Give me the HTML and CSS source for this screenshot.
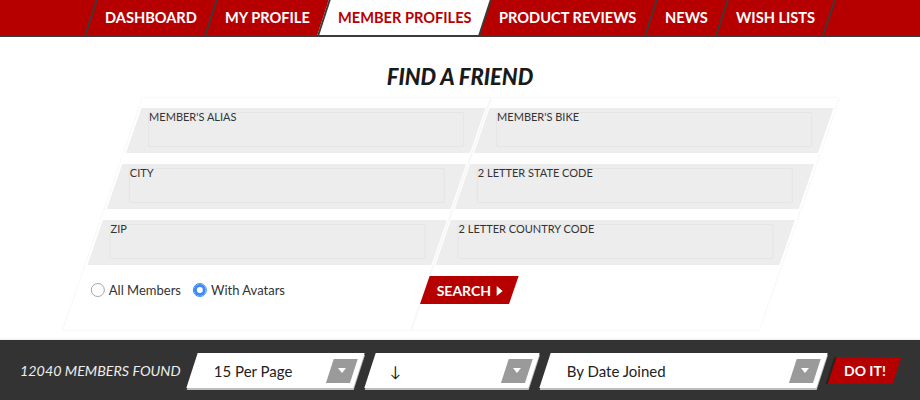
FILE: index.html
```html
<!DOCTYPE html>
<html lang="en">
<head>
  <meta charset="UTF-8" />
  <meta name="viewport" content="width=device-width, initial-scale=1.0"/>
  <title>Find a Friend</title>
  <link rel="stylesheet" href="styles.css">
</head>
<body>
  <nav class="topnav">
    <ul>
      <li><a href="#">Dashboard</a></li>
      <li><a href="#">My Profile</a></li>
      <li class="active"><a href="#">Member Profiles</a></li>
      <li><a href="#">Product Reviews</a></li>
      <li><a href="#">News</a></li>
      <li><a href="#">Wish Lists</a></li>
    </ul>
  </nav>

  <main class="search-area">
    <h1>Find a Friend</h1>
    <form class="finder">
      <div class="panel">
        <div class="field"><label class="box"><span>Member's Alias</span><input type="text"></label></div>
        <div class="field"><label class="box"><span>City</span><input type="text"></label></div>
        <div class="field"><label class="box"><span>Zip</span><input type="text"></label></div>
        <div class="bottom-row">
          <div class="radios">
            <label><input type="radio" name="who"> All Members</label>
            <label><input type="radio" name="who" checked> With Avatars</label>
          </div>
        </div>
      </div>
      <div class="panel">
        <div class="field"><label class="box"><span>Member's Bike</span><input type="text"></label></div>
        <div class="field"><label class="box"><span>2 Letter State Code</span><input type="text"></label></div>
        <div class="field"><label class="box"><span>2 Letter Country Code</span><input type="text"></label></div>
        <div class="bottom-row">
          <button type="button" class="search-btn"><span>Search <i class="tri"></i></span></button>
        </div>
      </div>
    </form>
  </main>

  <footer class="results">
    <div class="count">12040 MEMBERS FOUND</div>
    <div class="pick pick-page">
      <span class="pick-text">15 Per Page</span>
      <span class="caret"><i></i></span>
    </div>
    <div class="pick pick-dir">
      <span class="pick-text">&darr;</span>
      <span class="caret"><i></i></span>
    </div>
    <div class="pick pick-sort">
      <span class="pick-text">By Date Joined</span>
      <span class="caret"><i></i></span>
    </div>
    <button type="button" class="go-btn"><span>DO IT!</span></button>
  </footer>
</body>
</html>
```

FILE: styles.css
```css
* {
  box-sizing: border-box;
}
body {
  margin: 0;
  font-family: Lato, "Liberation Sans", sans-serif;
  background: #fff;
  color: #222;
  overflow: hidden;
}

/* top navigation */
.topnav {
  background: #b60000;
  border-bottom: 2px solid #3a3a3a;
  height: 37px;
}
.topnav ul {
  list-style: none;
  margin: 0;
  padding: 0;
  display: flex;
  justify-content: center;
  height: 35px;
}
.topnav li {
  transform: skewX(-18deg);
  border-left: 2px solid #3a3a3a;
  padding: 0 13px;
  display: flex;
  align-items: center;
}
.topnav li:last-child {
  border-right: 2px solid #3a3a3a;
}
.topnav a {
  display: block;
  transform: skewX(18deg);
  color: #fff;
  text-decoration: none;
  text-transform: uppercase;
  font-weight: 700;
  font-size: 14.6px;
}
.topnav li.active {
  background: #fff;
}
.topnav li.active a {
  color: #b60000;
}

/* find a friend */
.search-area h1 {
  margin: 27px 0 8px;
  text-align: center;
  font-size: 22px;
  line-height: 26px;
  font-weight: 900;
  font-style: italic;
  text-transform: uppercase;
  color: #1a1a1a;
}
.finder {
  width: 696px;
  padding-right: 18px;
  box-sizing: content-box;
  margin: 0 auto;
  display: grid;
  grid-template-columns: 1fr 1fr;
}
.panel {
  transform: skewX(-19deg);
  padding: 10px 2px 26px;
  box-shadow: 0 0 2px rgba(0,0,0,0.09);
}
.field {
  background: #ededed;
  height: 45px;
  margin-bottom: 11px;
  padding: 4px 14px 6px;
}
.field:nth-child(3) {
  margin-bottom: 0;
}
.box {
  display: block;
  transform: skewX(19deg);
  height: 35px;
  border: 1px solid #e5e5e5;
  border-radius: 2px;
  padding: 0;
}
.box span {
  display: block;
  margin-top: -1px;
  font-size: 11px;
  line-height: 10px;
  text-transform: uppercase;
  color: #333;
}
.box input {
  display: block;
  width: 100%;
  height: 20px;
  border: none;
  background: transparent;
  outline: none;
}
.bottom-row {
  margin-top: 11px;
  height: 28px;
}
.radios {
  transform: skewX(19deg);
  display: flex;
  align-items: center;
  height: 28px;
  padding-left: 12px;
  gap: 12px;
  font-size: 13px;
  color: #333;
}
.radios label {
  display: flex;
  align-items: center;
  gap: 4px;
}
.radios input {
  appearance: none;
  margin: 0;
  width: 14px;
  height: 14px;
  border-radius: 50%;
  border: 1px solid #a5a5a5;
  background: #fff;
}
.radios input:checked {
  border-color: #3d8af7;
  box-shadow: inset 0 0 0 3px #3d8af7;
}
.search-btn {
  width: 89px;
  height: 28px;
  margin-left: -2px;
  border: none;
  background: #b60000;
  color: #fff;
  font-family: inherit;
  font-weight: 700;
  font-size: 14px;
  text-transform: uppercase;
  cursor: pointer;
  padding: 0;
}
.search-btn span {
  display: inline-block;
  transform: skewX(19deg);
}
.tri {
  display: inline-block;
  width: 0;
  height: 0;
  border-left: 6px solid #fff;
  border-top: 5px solid transparent;
  border-bottom: 5px solid transparent;
  margin-left: 2px;
}

/* results bar */
.results {
  margin-top: 10px;
  background: #333;
  box-shadow: 0 -1px 2px rgba(0,0,0,0.08);
  height: 60px;
  display: flex;
  align-items: center;
  gap: 11px;
  padding: 0 20px;
}
.count {
  color: #eee;
  font-style: italic;
  font-size: 14.3px;
  width: 161px;
  white-space: nowrap;
}
.pick {
  transform: skewX(-18deg);
  background: #fff;
  height: 35px;
  display: flex;
  align-items: center;
  box-shadow: 1px 2px 0 #bdbdbd;
}
.pick-page { width: 167px; }
.pick-dir { width: 164px; }
.pick-sort { width: 277px; }
.pick-text {
  flex: 1;
  transform: skewX(18deg);
  padding-left: 22px;
  font-size: 15px;
  color: #222;
}
.pick-dir .pick-text {
  padding-left: 20px;
}
.caret {
  width: 24px;
  height: 24px;
  margin-right: 5px;
  background: #9a9a9a;
  display: flex;
  align-items: center;
  justify-content: center;
}
.caret i {
  width: 0;
  height: 0;
  border-top: 5px solid #fff;
  border-left: 4px solid transparent;
  border-right: 4px solid transparent;
  transform: skewX(18deg);
}
.go-btn {
  margin-left: -1px;
  transform: skewX(-18deg);
  width: 65px;
  height: 27px;
  border: none;
  background: #b60000;
  color: #fff;
  font-family: inherit;
  font-weight: 700;
  font-size: 14px;
  box-shadow: -2px 0 0 #222;
  padding: 0;
}
.go-btn span {
  display: inline-block;
  transform: skewX(18deg);
}
```
